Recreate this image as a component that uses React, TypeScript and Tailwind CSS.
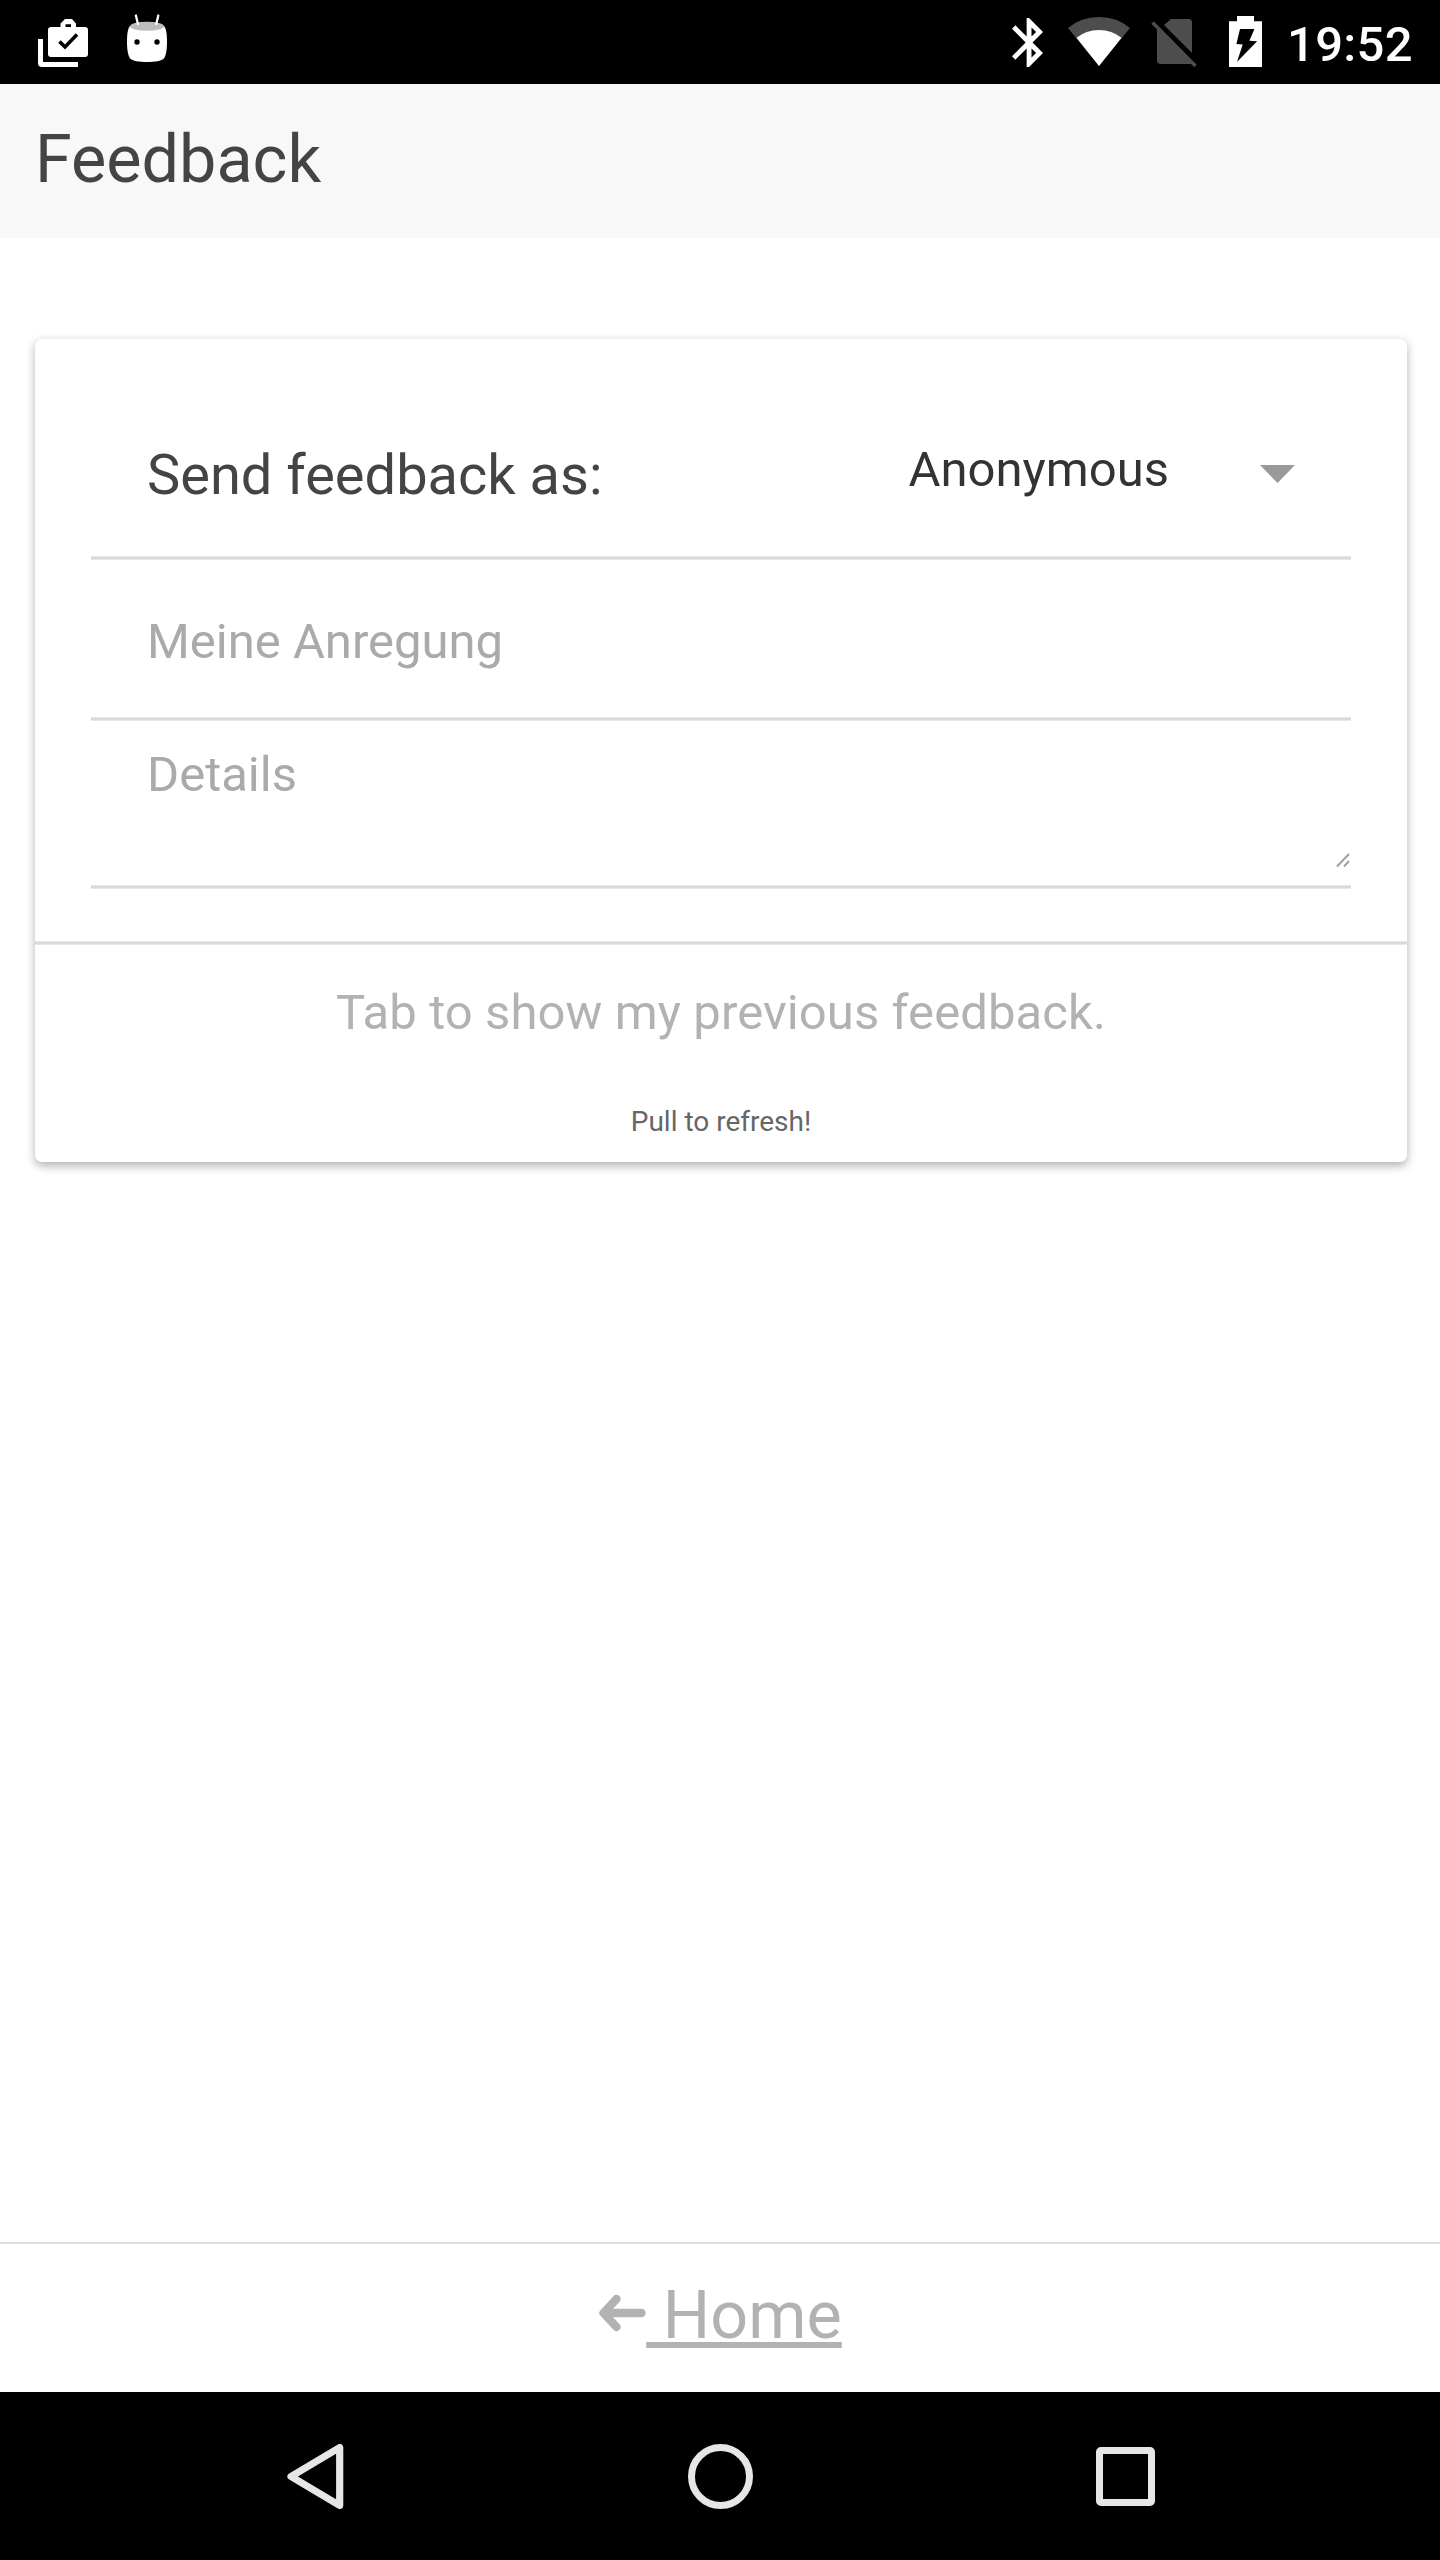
const Divider = () => <div className="h-1 shrink-0 border-y border-[#e6e6e6] bg-[#dadada]" />;

function StatusBar() {
  return (
    <div className="flex h-[84px] items-start bg-black text-white">
      {/* Work apps notification */}
      <svg className="mt-[19px] ml-[38px]" width="50" height="48" viewBox="38 19 50 48">
        <path d="M38 39h5v23h35v5H42a4 4 0 0 1-4-4z" fill="#fff" />
        <path
          fillRule="evenodd"
          d="M51 27h9.500v-3.500L65 19h7l4 4.500V27h9a3 3 0 0 1 3 3v24a3 3 0 0 1-3 3H51a3 3 0 0 1-3-3V30a3 3 0 0 1 3-3zM65.500 24.200V27H71v-2.800z"
          fill="#fff"
        />
        <path d="M59.500 41.500L65 47l12-12.500" fill="none" stroke="#000" strokeWidth="3.600" />
      </svg>
      {/* Robot head notification */}
      <svg className="mt-[13px] ml-[38px]" width="42" height="50" viewBox="126 13 42 50">
        <path
          d="M130 26C127.500 29 127 35 127 42c0 7 .8 13 3 16.500 2.500 2.500 9 3.500 17 3.500s14.500-1 17-3.500c2.200-3.500 3-9.500 3-16.500 0-7-.5-13-3-16z"
          fill="#fff"
        />
        <ellipse cx="147" cy="26.200" rx="17" ry="4.500" fill="#bdbdbd" />
        <path d="M135.900 15.500l2 8.500M158.300 15.500l-2 8.500" stroke="#fff" strokeWidth="2.300" strokeLinecap="round" />
        <circle cx="137" cy="42" r="2.700" />
        <circle cx="157" cy="42" r="2.700" />
      </svg>
      {/* Bluetooth */}
      <svg className="mt-[18px] ml-auto" width="31" height="49" viewBox="5 2 12.71 20" preserveAspectRatio="none">
        <path
          d="M17.71 7.71L12 2h-1v7.59L6.41 5 5 6.41 10.59 12 5 17.59 6.41 19 11 14.41V22h1l5.710-5.710-4.300-4.290 4.300-4.290zM13 5.830l1.880 1.880L13 9.590V5.830zm1.880 10.460L13 18.170v-3.760l1.880 1.880z"
          fill="#fff"
        />
      </svg>
      {/* Wi-Fi */}
      <svg className="mt-[17px] ml-[25px]" width="62" height="49" viewBox="1068 17 62 49">
        <path d="M1099 66L1068 28Q1081 17 1099 17T1130 28z" fill="#4d4d4d" />
        <path d="M1099 66L1076.500 37.800Q1086 30 1099 30T1121.500 37.800z" fill="#fff" />
      </svg>
      {/* No SIM */}
      <svg className="mt-[19px] ml-[21px]" width="46" height="49" viewBox="1151 19 46 49">
        <path
          d="M1157 27v33a4 4 0 0 0 4 4h31.500zM1164 25l7-6h17.500a3.500 3.500 0 0 1 3.500 3.500V53z"
          fill="#4d4d4d"
        />
        <path d="M1152.500 22.500L1195.500 66" stroke="#4d4d4d" strokeWidth="3.400" />
      </svg>
      {/* Battery, charging */}
      <svg className="mt-[16px] ml-[32px]" width="33" height="51" viewBox="1229 16 33 51">
        <path d="M1237 16h17v5.300h8V67h-33V21.300h8z" fill="#fff" />
        <path d="M1240 29h14.400l-5 11.700 7.700.6L1237 62l5.700-17.400-6.300-.6z" fill="#000" />
      </svg>
      <span className="mt-[15px] mr-[28px] ml-[25px] w-[125px] text-[49px] leading-[60px] font-medium tracking-[0.3px]">
        19:52
      </span>
    </div>
  );
}

function FeedbackCard() {
  return (
    <main className="mt-[101px] mr-[33px] ml-[35px] flex h-[823px] flex-col rounded-[7px] bg-white shadow-[0_3.5px_10px_rgba(0,0,0,0.3)]">
      <form className="mx-[56px] flex flex-col">
        <div className="flex h-[217px] items-start pt-[100px] pr-[56px] pl-[56px]">
          <label className="mt-px text-[56px] leading-[70px] text-[#444444]">Send feedback as:</label>
          <span className="mt-px ml-auto text-[49px] leading-[60px] text-[#333333]">Anonymous</span>
          <svg className="mt-[26px] ml-[91px]" width="35" height="18" viewBox="0 0 35 18">
            <path d="M0 0h35L17.500 18z" fill="#999999" />
          </svg>
        </div>
        <Divider />
        <div className="h-[157px] pt-[52px] pl-[56px] text-[49px] leading-[60px] text-[#aaaaaa]">Meine Anregung</div>
        <Divider />
        <div className="flex h-[164px] items-start pt-[24px] pl-[56px] text-[49px] leading-[60px] text-[#aaaaaa]">
          Details
          <svg className="mt-[108px] mr-px ml-auto" width="14" height="15" viewBox="0 0 14 15">
            <path d="M1 13.500L13 1M8 13.500l5-5.500" fill="none" stroke="#a0a0a0" strokeWidth="2" />
          </svg>
        </div>
        <Divider />
      </form>
      <div className="h-[52px] shrink-0" />
      <Divider />
      <p className="mt-[38px] text-center text-[49px] leading-[60px] tracking-[0.09px] text-[#b2b2b2]">
        Tab to show my previous feedback.
      </p>
      <p className="mt-[59px] text-center text-[28px] leading-[40px] text-[#666666]">Pull to refresh!</p>
    </main>
  );
}

function NavigationBar() {
  return (
    <nav className="flex h-[168px] items-start bg-black pt-[52px]">
      <svg className="ml-[287px]" width="57" height="65" viewBox="287 2444 57 65">
        <path
          d="M291 2476.500L339.700 2447.500V2505.500z"
          fill="none"
          stroke="#e6e6e6"
          strokeWidth="7.200"
          strokeLinejoin="round"
        />
      </svg>
      <div className="ml-[344px] size-[65px] rounded-full border-[7.5px] border-[#e6e6e6]" />
      <div className="mt-[3px] ml-[343px] size-[59px] rounded-[5px] border-[7px] border-[#e6e6e6]" />
    </nav>
  );
}

export default function App() {
  return (
    <div className="flex h-[2560px] w-[1440px] flex-col bg-white font-['Roboto',sans-serif]">
      <StatusBar />
      <header className="h-[154px] bg-[#f8f8f8] pt-[35px] pl-[35px] text-[66.5px] leading-[80px] text-[#444444]">
        Feedback
      </header>
      <FeedbackCard />
      <footer className="mt-auto flex h-[150px] justify-center border-t-2 border-[#dddddd] pt-[31px] pl-px text-[#b2b2b2]">
        <svg className="mt-[19px]" width="47" height="38" viewBox="0 0 47 38">
          <path
            d="M17.500 5L4.500 19l13 14M5.500 19H42.500"
            fill="none"
            stroke="#b2b2b2"
            strokeWidth="8.400"
            strokeLinecap="round"
            strokeLinejoin="round"
          />
        </svg>
        <span className="text-[66.5px] leading-[80px] whitespace-pre underline">{" Home"}</span>
      </footer>
      <NavigationBar />
    </div>
  );
}
